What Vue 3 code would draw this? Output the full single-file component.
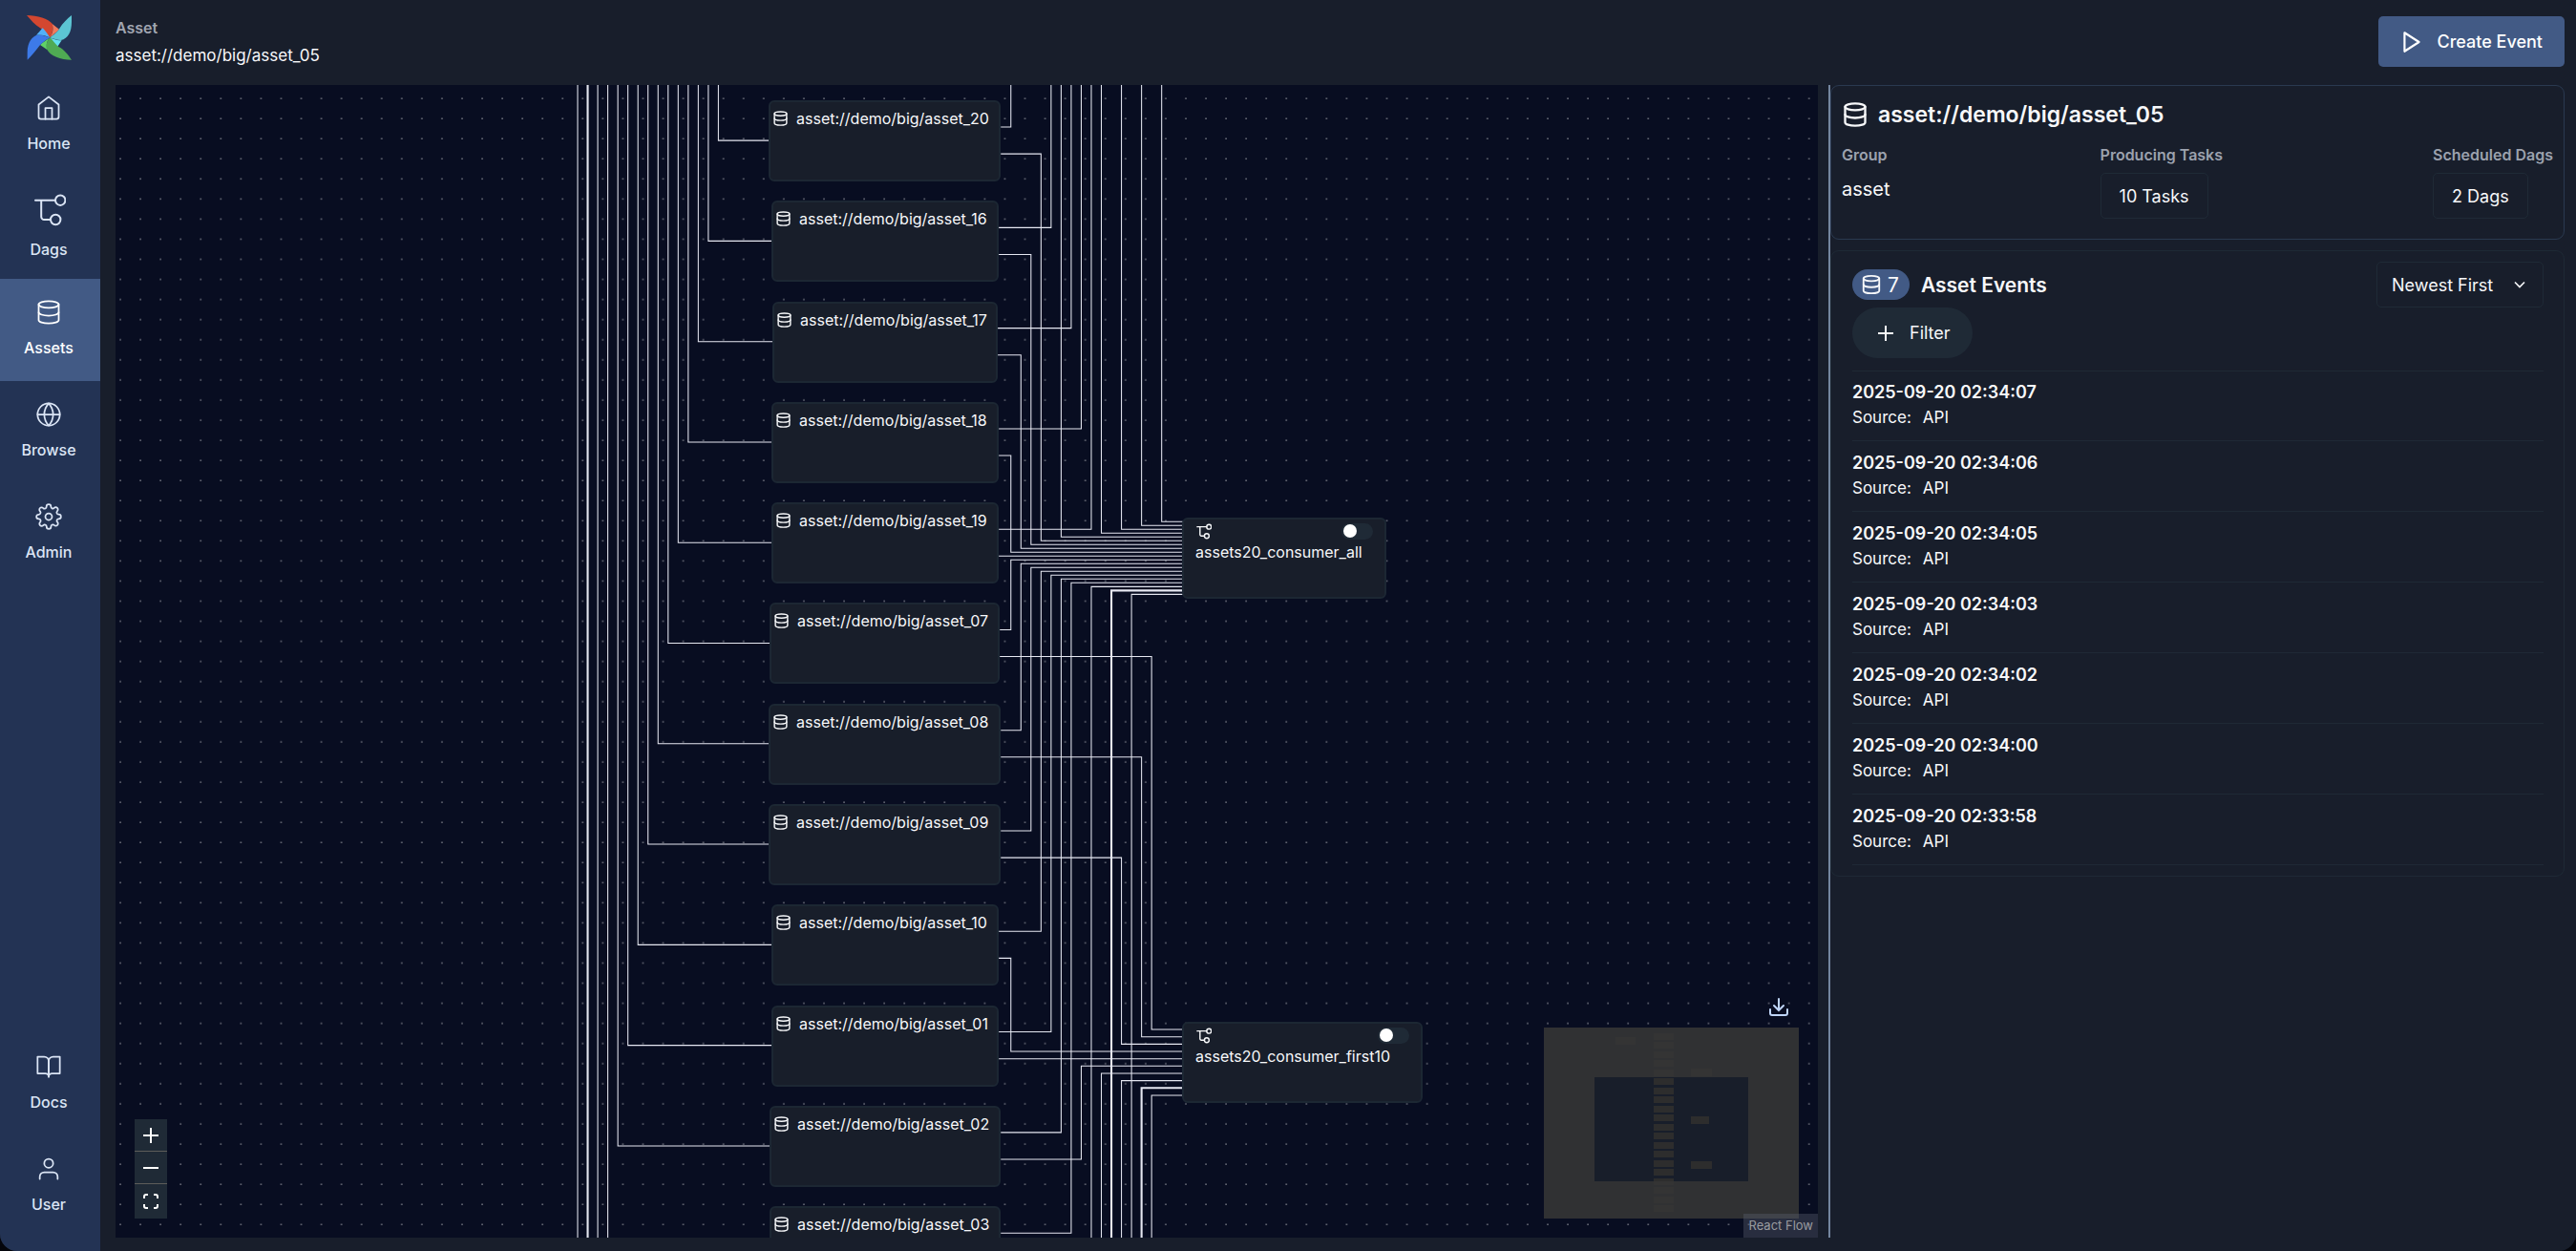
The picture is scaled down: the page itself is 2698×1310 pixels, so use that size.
<script setup>
import { ref } from 'vue'

const mainNav = [
  { label: 'Home', icon: 'home' },
  { label: 'Dags', icon: 'dag' },
  { label: 'Assets', icon: 'database', active: true },
  { label: 'Browse', icon: 'globe' },
  { label: 'Admin', icon: 'settings' },
]
const footNav = [
  { label: 'Docs', icon: 'book' },
  { label: 'User', icon: 'user' },
]

const icons = {
  home: '<path d="M3 9l9-7 9 7v11a2 2 0 0 1-2 2H5a2 2 0 0 1-2-2z"/><path d="M9 22V12h6v10"/>',
  database:
    '<ellipse cx="12" cy="5" rx="9" ry="3"/><path d="M21 12c0 1.66-4 3-9 3s-9-1.34-9-3"/><path d="M3 5v14c0 1.66 4 3 9 3s9-1.34 9-3V5"/>',
  globe:
    '<circle cx="12" cy="12" r="10"/><path d="M2 12h20"/><path d="M12 2a15.3 15.3 0 0 1 4 10 15.3 15.3 0 0 1-4 10 15.3 15.3 0 0 1-4-10 15.3 15.3 0 0 1 4-10z"/>',
  settings:
    '<circle cx="12" cy="12" r="3"/><path d="M19.4 15a1.65 1.65 0 0 0 .33 1.82l.06.06a2 2 0 0 1 0 2.83 2 2 0 0 1-2.83 0l-.06-.06a1.65 1.65 0 0 0-1.82-.33 1.65 1.65 0 0 0-1 1.51V21a2 2 0 0 1-2 2 2 2 0 0 1-2-2v-.09A1.65 1.65 0 0 0 9 19.4a1.65 1.65 0 0 0-1.82.33l-.06.06a2 2 0 0 1-2.83 0 2 2 0 0 1 0-2.83l.06-.06a1.65 1.65 0 0 0 .33-1.82 1.65 1.65 0 0 0-1.51-1H3a2 2 0 0 1-2-2 2 2 0 0 1 2-2h.09A1.65 1.65 0 0 0 4.6 9a1.65 1.65 0 0 0-.33-1.82l-.06-.06a2 2 0 0 1 0-2.83 2 2 0 0 1 2.83 0l.06.06a1.65 1.65 0 0 0 1.82.33H9a1.65 1.65 0 0 0 1-1.51V3a2 2 0 0 1 2-2 2 2 0 0 1 2 2v.09a1.65 1.65 0 0 0 1 1.51 1.65 1.65 0 0 0 1.82-.33l.06-.06a2 2 0 0 1 2.83 0 2 2 0 0 1 0 2.83l-.06.06a1.65 1.65 0 0 0-.33 1.82V9a1.65 1.65 0 0 0 1.51 1H21a2 2 0 0 1 2 2 2 2 0 0 1-2 2h-.09a1.65 1.65 0 0 0-1.51 1z"/>',
  book: '<path d="M2 3h6a4 4 0 0 1 4 4v14a3 3 0 0 0-3-3H2z"/><path d="M22 3h-6a4 4 0 0 0-4 4v14a3 3 0 0 1 3-3h7z"/>',
  user: '<path d="M20 21v-2a4 4 0 0 0-4-4H8a4 4 0 0 0-4 4v2"/><circle cx="12" cy="7" r="4"/>',
  dag: '<path d="M4 7.7H25M10.2 7.7V25a3 3 0 0 0 3 3h6.3"/><circle cx="30.2" cy="7.7" r="5.2"/><circle cx="25.2" cy="28" r="5.2"/>',
}

// Viewport of the graph: flow coordinates are scaled by zoom, then moved.
const zoom = 1.0528
const origin = { x: 484, y: 16 }
const px = (u) => Math.round(u * zoom)

// Each asset: left and right edge, and the columns its edges turn at.
const assets = [
  { id: '20', x: 190, w: 231, inCol: 140 },
  { id: '16', x: 193, w: 226, inCol: 130 },
  { id: '17', x: 194, w: 224, inCol: 120 },
  { id: '18', x: 193, w: 226, inCol: 110 },
  { id: '19', x: 193, w: 226, inCol: 100 },
  { id: '07', x: 191, w: 229, inCol: 90 },
  { id: '08', x: 190, w: 231, inCol: 80 },
  { id: '09', x: 190, w: 231, inCol: 70 },
  { id: '10', x: 193, w: 226, inCol: 60 },
  { id: '01', x: 193, w: 226, inCol: 50 },
  { id: '02', x: 191, w: 230, inCol: 40 },
  { id: '03', x: 191, w: 230, inCol: 30 },
].map((a, i) => ({ ...a, y: i * 100 }))

const dags = [
  { id: 'assets20_consumer_all', x: 601, y: 415, w: 203 },
  { id: 'assets20_consumer_first10', x: 601, y: 917, w: 239 },
]

const place = (n) => ({
  left: origin.x + px(n.x) + 'px',
  top: origin.y + px(n.y) + 'px',
  width: px(n.w) + 'px',
})

const TOP = -60
const BOTTOM = 1200
const entryAll = (n) => 415.24 + (n * 80) / 21
const entryFirst = (n) => 916.97 + (n * 80) / 11
const upper = (i) => i * 100 + 80 / 3
const lower = (i) => i * 100 + 160 / 3
const right = (i) => assets[i].x + assets[i].w

const edges = []
const add = (d, strong = false) => edges.push({ d, strong })

assets.forEach((a, i) => add(`M${a.inCol} ${TOP}V${i * 100 + 40}H${a.x}`))
;[0, 10, 20].forEach((x) => add(`M${x} ${TOP}V${BOTTOM}`, x === 10))

// Edges that leave through the top of the canvas.
;[[0, 431], [1, 471], [2, 491], [3, 501], [4, 511]].forEach(([i, x]) =>
  add(`M${right(i)} ${upper(i)}H${x}V${TOP}`))
// Edges that come in from the top.
;[[1, 581], [2, 561], [3, 541], [4, 521], [5, 481]].forEach(([n, x]) =>
  add(`M${x} ${TOP}V${entryAll(n)}H602`))
// Asset to assets20_consumer_all.
;[[0, 6, 461], [1, 7, 451], [2, 8, 441], [3, 9, 431]].forEach(([i, n, x]) =>
  add(`M${right(i)} ${lower(i)}H${x}V${entryAll(n)}H602`))
add(`M${right(4)} ${lower(4)}H602`)
;[[5, 11, 431], [6, 12, 441], [7, 13, 451], [8, 14, 461], [9, 15, 471], [10, 16, 481], [11, 17, 491]].forEach(
  ([i, n, x]) => add(`M${right(i)} ${upper(i)}H${x}V${entryAll(n)}H602`))
;[[18, 511], [19, 531], [20, 551]].forEach(([n, x]) =>
  add(`M${x} ${BOTTOM}V${entryAll(n)}H602`, n === 19))
// Asset to assets20_consumer_first10.
;[[5, 1, 571], [6, 2, 561], [7, 3, 541], [8, 4, 431], [10, 6, 501]].forEach(([i, n, x]) =>
  add(`M${right(i)} ${lower(i)}H${x}V${entryFirst(n)}H602`))
add(`M${right(9)} ${lower(9)}H602`)
;[[7, 521], [8, 541], [9, 561], [10, 571]].forEach(([n, x]) =>
  add(`M${x} ${BOTTOM}V${entryFirst(n)}H602`, n === 9))

const miniAssets = Array.from({ length: 20 }, (_, i) => 6 + Math.round(i * 9.49))
const miniDags = [
  { x: 75, y: 10, w: 21 },
  { x: 154, y: 43, w: 22 },
  { x: 154, y: 93, w: 19 },
  { x: 154, y: 140, w: 22 },
]

const order = ref('newest')
const events = [
  '2025-09-20 02:34:07',
  '2025-09-20 02:34:06',
  '2025-09-20 02:34:05',
  '2025-09-20 02:34:03',
  '2025-09-20 02:34:02',
  '2025-09-20 02:34:00',
  '2025-09-20 02:33:58',
]
</script>

<template>
  <div class="app">
    <nav class="sidebar" aria-label="Main">
      <a class="logo" href="#" aria-label="Airflow">
        <svg viewBox="0 0 141 141" width="47" height="47">
          <path fill="#d34730" d="M0 0C34 0 68 12 80 26C84 32 84 52 73 70C60 56 48 44 42 40C26 30 12 14 0 0Z" />
          <path fill="#f17a5c" d="M80 27L102 44C92 54 82 62 73 70C84 54 84 38 80 27Z" />
          <path fill="#5cc5d3" d="M141 0V22C141 52 130 74 108 78C98 79 84 74 73 70C90 58 100 48 104 40C112 26 126 12 141 0Z" />
          <path fill="#63dfee" d="M73 70C86 76 98 80 110 78L95 101C88 92 80 80 73 70Z" />
          <path fill="#4faa53" d="M73 70C82 80 92 92 100 99C116 106 130 124 141 140C106 140 74 128 64 108C58 96 64 82 73 70Z" />
          <path fill="#60d266" d="M73 70C62 82 60 96 64 108L42 93C50 86 62 78 73 70Z" />
          <path fill="#3d7ae8" d="M2 140V116C2 84 18 66 32 62C44 60 60 66 73 70C56 80 44 90 38 98C28 112 14 128 2 140Z" />
          <path fill="#52b0f8" d="M73 70C60 64 44 60 30 62L50 40C60 50 66 60 73 70Z" />
        </svg>
      </a>
      <a
        v-for="item in mainNav"
        :key="item.label"
        href="#"
        class="nav-item"
        :class="{ active: item.active }"
      >
        <svg
          class="icon"
          :class="{ big: item.icon === 'dag' }"
          :viewBox="item.icon === 'dag' ? '0 0 36 36' : '0 0 24 24'"
          v-html="icons[item.icon]"
        ></svg>
        <span>{{ item.label }}</span>
      </a>
      <div class="spacer"></div>
      <a v-for="item in footNav" :key="item.label" href="#" class="nav-item">
        <svg class="icon" viewBox="0 0 24 24" v-html="icons[item.icon]"></svg>
        <span>{{ item.label }}</span>
      </a>
    </nav>

    <div class="page">
      <header class="header">
        <div class="crumb">
          <span class="crumb-label">Asset</span>
          <a class="crumb-link" href="#">asset://demo/big/asset_05</a>
        </div>
        <button class="create" type="button">
          <svg class="play" viewBox="0 0 24 24"><path d="M5 3l14 9-14 9V3z" /></svg>
          Create Event
        </button>
      </header>

      <main class="content">
        <section class="graph" aria-label="Asset graph">
          <svg class="edges" width="100%" height="100%">
            <defs>
              <pattern
                id="dots"
                x="5"
                y="13"
                :width="20 * zoom"
                :height="20 * zoom"
                patternUnits="userSpaceOnUse"
                patternTransform="translate(-1 0)"
              >
                <circle cx="1" cy="1" r="0.6" fill="#fff" />
              </pattern>
            </defs>
            <rect width="100%" height="100%" fill="url(#dots)" />
            <g :transform="`translate(${origin.x} ${origin.y}) scale(${zoom})`">
              <path v-for="(e, i) in edges" :key="i" :d="e.d" class="edge" :class="{ strong: e.strong }" />
            </g>
          </svg>

          <a v-for="a in assets" :key="a.id" href="#" class="node asset-node" :style="place(a)">
            <svg class="icon" viewBox="0 0 24 24" v-html="icons.database"></svg>
            <span>asset://demo/big/asset_{{ a.id }}</span>
          </a>

          <div v-for="d in dags" :key="d.id" class="node dag-node" :style="place(d)">
            <div class="dag-top">
              <svg class="icon" viewBox="0 0 36 36" v-html="icons.dag"></svg>
              <input type="checkbox" role="switch" class="switch" :aria-label="'Unpause ' + d.id" />
            </div>
            <a href="#">{{ d.id }}</a>
          </div>

          <div class="controls">
            <button type="button" aria-label="Zoom in">
              <svg viewBox="0 0 16 16"><path d="M0 8h16M8 0v16" /></svg>
            </button>
            <button type="button" aria-label="Zoom out">
              <svg viewBox="0 0 16 16"><path d="M0 8h16" /></svg>
            </button>
            <button type="button" aria-label="Fit view">
              <svg viewBox="0 0 16 16">
                <path d="M1 5V3a2 2 0 0 1 2-2h2M11 1h2a2 2 0 0 1 2 2v2M15 11v2a2 2 0 0 1-2 2h-2M5 15H3a2 2 0 0 1-2-2v-2" />
              </svg>
            </button>
          </div>

          <button class="download" type="button" aria-label="Download graph image">
            <svg viewBox="0 0 20 20">
              <path d="M10 1v12M5 8l5 5 5-5M1 12v4a2 2 0 0 0 2 2h14a2 2 0 0 0 2-2v-4" />
            </svg>
          </button>

          <svg class="minimap" viewBox="0 0 267 200" role="img" aria-label="Mini map">
            <rect width="267" height="200" fill="#181e2a" />
            <g fill="#2d2d2d">
              <rect v-for="y in miniAssets" :key="y" x="115" :y="y" width="21" height="7" />
              <rect v-for="m in miniDags" :key="m.y" :x="m.x" :y="m.y" :width="m.w" height="8" />
            </g>
            <path d="M0 0H267V200H0ZM53 52V161H214V52Z" fill="#363636" fill-opacity="0.82" fill-rule="evenodd" />
          </svg>
          <a class="attribution" href="#">React Flow</a>
        </section>

        <div class="divider" role="separator"></div>

        <aside class="panel">
          <section class="card summary">
            <h1>
              <svg class="icon" viewBox="0 0 24 24" v-html="icons.database"></svg>
              asset://demo/big/asset_05
            </h1>
            <div class="stats">
              <div class="stat">
                <h2>Group</h2>
                <p>asset</p>
              </div>
              <div class="stat">
                <h2>Producing Tasks</h2>
                <button type="button">10 Tasks</button>
              </div>
              <div class="stat">
                <h2>Scheduled Dags</h2>
                <button type="button">2 Dags</button>
              </div>
            </div>
          </section>

          <section class="card events">
            <div class="events-head">
              <h3>
                <span class="badge">
                  <svg class="icon" viewBox="0 0 24 24" v-html="icons.database"></svg>
                  7
                </span>
                Asset Events
              </h3>
              <div class="sort">
                <select v-model="order" aria-label="Sort events">
                  <option value="newest">Newest First</option>
                  <option value="oldest">Oldest First</option>
                </select>
                <svg viewBox="0 0 24 24"><path d="M6 9l6 6 6-6" /></svg>
              </div>
            </div>
            <button class="filter" type="button">
              <svg viewBox="0 0 16 16"><path d="M0 8h16M8 0v16" /></svg>
              Filter
            </button>
            <ul>
              <li v-for="time in events" :key="time">
                <time>{{ time }}</time>
                <p><span>Source:</span><span>API</span></p>
              </li>
            </ul>
          </section>
        </aside>
      </main>
    </div>
  </div>
</template>

<style>
body {
  margin: 0;
  background: #05060c;
}
</style>

<style scoped>
* {
  box-sizing: border-box;
}
.app {
  display: flex;
  height: 100vh;
  overflow: hidden;
  border-radius: 0 0 18px 18px;
  background: #181e2b;
  color: #f7f8fa;
  font-family: Inter, 'Liberation Sans', sans-serif;
  font-size: 17px;
}
a {
  color: inherit;
  text-decoration: none;
}
button,
select {
  font: inherit;
  color: inherit;
  border: 0;
  padding: 0;
  background: none;
  cursor: pointer;
}
h1,
h2,
h3,
p,
ul {
  margin: 0;
  padding: 0;
}
svg {
  display: block;
  flex: none;
  fill: none;
  stroke: currentColor;
  stroke-width: 2;
}
.icon {
  width: 28px;
  height: 28px;
  stroke-width: 1.5;
  stroke-linecap: round;
  stroke-linejoin: round;
}

/* Sidebar */
.sidebar {
  flex: none;
  display: flex;
  flex-direction: column;
  width: 105px;
  padding-bottom: 14px;
  background: #233354;
  color: #dbe5f5;
}
.logo {
  display: flex;
  justify-content: center;
  height: 78px;
  padding: 16px 2px 0 0;
}
.logo svg {
  stroke: none;
}
.nav-item {
  display: flex;
  flex-direction: column;
  align-items: center;
  justify-content: center;
  gap: 8px;
  height: 107px;
  padding-right: 3px;
  font-size: 16px;
  font-weight: 500;
  line-height: 30px;
}
.nav-item.active {
  background: #425a85;
  color: #fff;
}
.nav-item .big {
  width: 36px;
  height: 36px;
  stroke-width: 2;
}
.spacer {
  flex: 1;
}

/* Page */
.page {
  flex: 1;
  min-width: 0;
  display: flex;
  flex-direction: column;
  padding: 17px 12px 14px 16px;
}
.header {
  display: flex;
  justify-content: space-between;
  margin-bottom: 18px;
}
.crumb {
  display: flex;
  flex-direction: column;
  gap: 4px;
  line-height: 26px;
}
.crumb-label {
  color: #a0a5b0;
  font-size: 16px;
  font-weight: 600;
  line-height: 24px;
}
.create {
  display: flex;
  align-items: center;
  gap: 14px;
  height: 53px;
  padding: 0 23px 0 22px;
  border-radius: 5px;
  background: #425a85;
  color: #fff;
  font-size: 18px;
  font-weight: 500;
}
.play {
  width: 26px;
  height: 26px;
  stroke-linejoin: round;
}
.content {
  flex: 1;
  min-height: 0;
  display: flex;
}

/* Graph */
.graph {
  position: relative;
  flex: 1783 1 0;
  overflow: hidden;
  background: #080d21;
}
.edges {
  position: absolute;
  inset: 0;
  stroke: none;
}
.edge {
  fill: none;
  stroke: #e6e8f2;
  stroke-width: 1;
}
.edge.strong {
  stroke-width: 2;
}
.node {
  position: absolute;
  height: 85px;
  border: 2px solid #1c2733;
  border-radius: 6px;
  background: #181e2a;
  font-size: 16px;
}
.asset-node {
  display: flex;
  align-items: flex-start;
  gap: 8px;
  padding: 7px 0 0 2px;
  line-height: 20px;
}
.asset-node .icon {
  width: 17px;
  height: 20px;
  stroke-width: 2;
}
.dag-node {
  padding: 3px 12px;
}
.dag-node a {
  display: block;
  line-height: 26px;
}
.dag-top {
  display: flex;
  justify-content: space-between;
  align-items: center;
  height: 18px;
}
.dag-node .icon {
  width: 17px;
  height: 17px;
  stroke-width: 3;
}
.switch {
  appearance: none;
  display: flex;
  align-items: center;
  width: 33px;
  height: 17px;
  margin: 0;
  padding: 0 2px;
  border-radius: 9px;
  background: #1f2a36;
}
.switch::before {
  content: '';
  width: 14px;
  height: 14px;
  border-radius: 50%;
  background: #fff;
}
.controls {
  position: absolute;
  left: 20px;
  bottom: 20px;
  display: flex;
  flex-direction: column;
  width: 34px;
  background: #1f2a36;
}
.controls button {
  display: flex;
  align-items: center;
  justify-content: center;
  height: 34px;
  border-bottom: 1px solid #5d5d5a;
  color: #fff;
}
.controls button:last-child {
  height: 36px;
  border-bottom: 0;
}
.controls svg {
  width: 16px;
  height: 16px;
}
.download {
  position: absolute;
  right: 31px;
  bottom: 231px;
  color: #bfd5f7;
}
.download svg {
  width: 20px;
  height: 20px;
  stroke-linecap: round;
}
.minimap {
  position: absolute;
  right: 20px;
  bottom: 20px;
  width: 267px;
  height: 200px;
  stroke: none;
}
.attribution {
  position: absolute;
  right: 0;
  bottom: 0;
  padding: 0 5px;
  background: rgb(90 96 110 / 40%);
  color: #999b9f;
  font-size: 13px;
  line-height: 25px;
}
.divider {
  flex: none;
  width: 2px;
  margin-left: 11px;
  background: #74869f;
}

/* Details */
.panel {
  flex: 769 1 0;
  min-width: 0;
  display: flex;
  flex-direction: column;
  gap: 11px;
}
.card {
  border: 1px solid #1e2935;
  border-radius: 9px;
}
.summary {
  height: 162px;
  padding: 11px;
  border-color: #2a3950;
}
h1 {
  display: flex;
  align-items: center;
  gap: 10px;
  font-size: 23px;
  font-weight: 600;
  line-height: 38px;
}
h1 .icon {
  stroke-width: 2;
}
.stats {
  display: flex;
  justify-content: space-between;
  margin-top: 11px;
}
h2 {
  color: #9ca2ae;
  font-size: 16px;
  font-weight: 600;
  line-height: 24px;
}
.stat p {
  padding-top: 8px;
  font-size: 20px;
  line-height: 32px;
}
.stat button {
  height: 48px;
  margin-top: 7px;
  padding: 0 19px;
  border: 1px solid #1f2a36;
  border-radius: 5px;
  font-size: 18px;
}
.events {
  padding: 11px 21px 11px 22px;
}
.events-head {
  display: flex;
  justify-content: space-between;
  align-items: center;
  height: 48px;
}
h3 {
  display: flex;
  align-items: center;
  gap: 12px;
  font-size: 21px;
  font-weight: 600;
}
.badge {
  display: flex;
  align-items: center;
  gap: 6px;
  height: 32px;
  padding: 0 11px 0 9px;
  border-radius: 16px;
  background: #425a85;
  font-weight: 400;
}
.badge .icon {
  width: 22px;
  height: 22px;
  stroke-width: 2;
}
.sort {
  display: flex;
  align-items: center;
  border: 1px solid #1f2a36;
  border-radius: 5px;
}
.sort select {
  appearance: none;
  width: 173px;
  height: 46px;
  padding: 0 48px 0 15px;
  background: transparent;
  font-size: 18px;
}
.sort svg {
  width: 20px;
  height: 20px;
  margin: 0 14px 0 -34px;
  pointer-events: none;
}
.filter {
  display: flex;
  align-items: center;
  gap: 17px;
  height: 53px;
  padding: 0 23px 0 27px;
  border-radius: 27px;
  background: #1f2a36;
  font-size: 18px;
}
.filter svg {
  width: 16px;
  height: 16px;
}
ul {
  margin-top: 13px;
  border-top: 1px solid #1f2935;
  list-style: none;
}
li {
  padding: 10px 0;
  border-bottom: 1px solid #1f2935;
}
li:first-child {
  padding-top: 9px;
}
time {
  display: block;
  font-size: 18px;
  font-weight: 600;
  line-height: 26px;
}
li p {
  display: flex;
  gap: 12px;
  line-height: 27px;
}
</style>
